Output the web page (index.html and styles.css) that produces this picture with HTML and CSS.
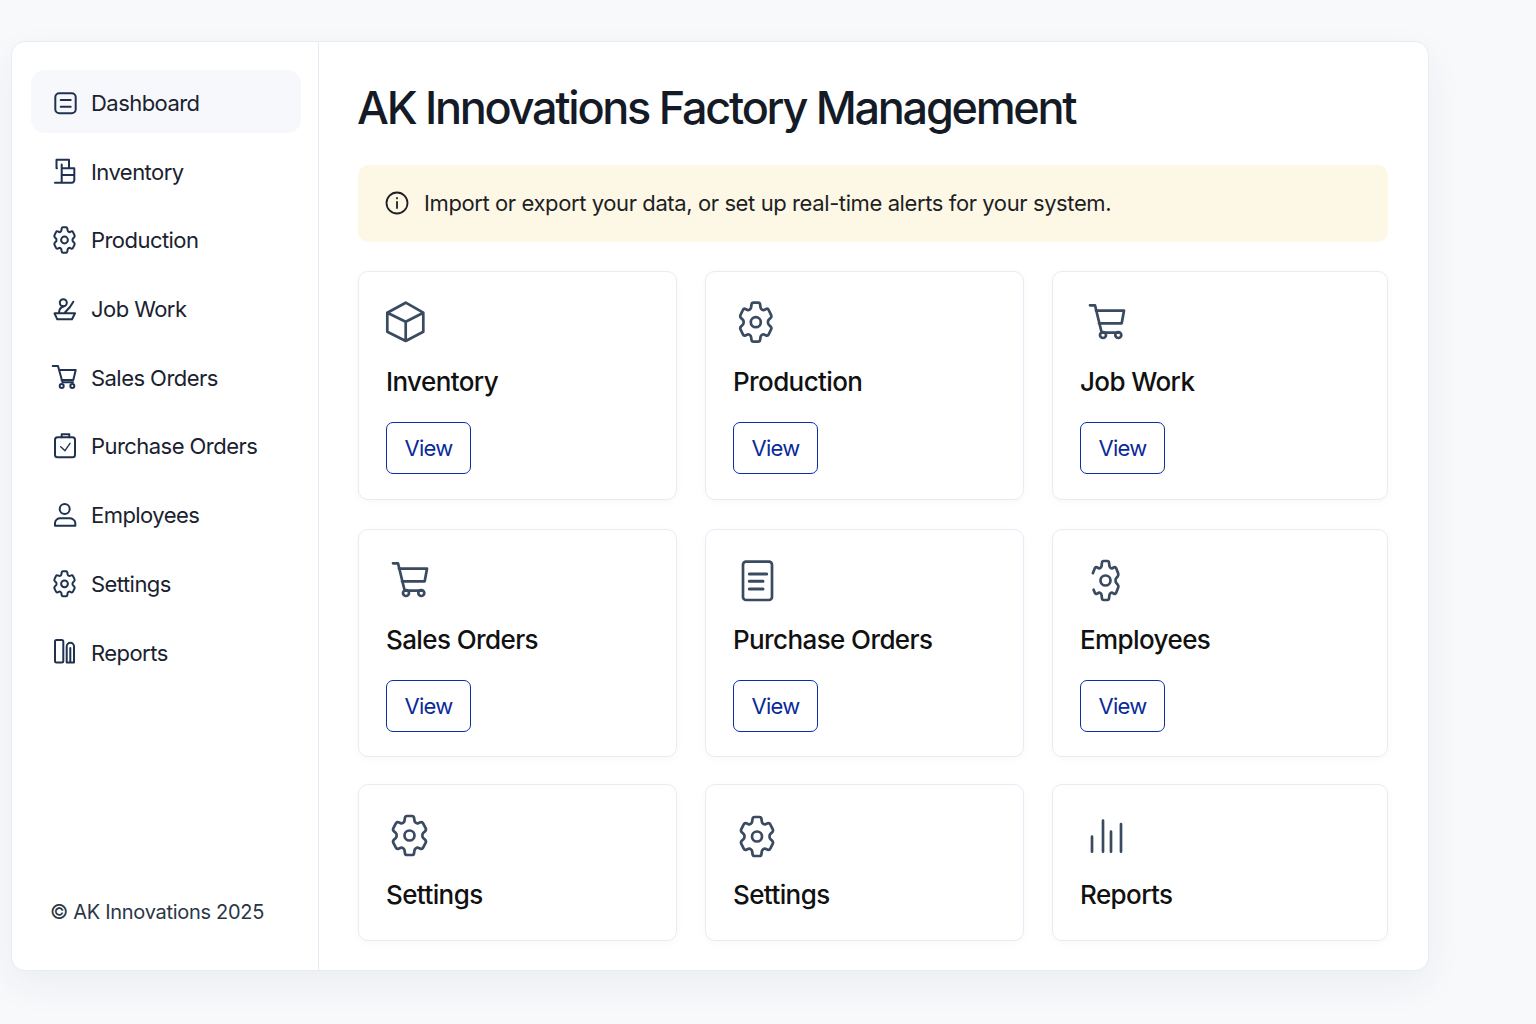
FILE: index.html
```html
<!DOCTYPE html>
<html lang="en">

<head>
  <meta charset="UTF-8">
  <meta name="viewport" content="width=device-width, initial-scale=1.0">
  <title>AK Innovations Factory Management</title>
  <link rel="stylesheet" href="styles.css">
</head>

<body>
  <svg class="defs" width="0" height="0">
    <symbol id="gear" viewBox="2.3 3 19.4 18" preserveAspectRatio="none" overflow="visible">
      <path vector-effect="non-scaling-stroke" d="M9.594 3.94c.09-.542.56-.94 1.11-.94h2.593c.55 0 1.02.398 1.11.94l.213 1.281c.063.374.313.686.645.87.074.04.147.083.22.127.325.196.72.257 1.075.124l1.217-.456a1.125 1.125 0 0 1 1.37.49l1.296 2.247a1.125 1.125 0 0 1-.26 1.431l-1.003.827c-.293.241-.438.613-.43.992a7.723 7.723 0 0 1 0 .255c-.008.378.137.75.43.991l1.004.827c.424.35.534.955.26 1.43l-1.298 2.247a1.125 1.125 0 0 1-1.369.491l-1.217-.456c-.355-.133-.75-.072-1.076.124a6.47 6.47 0 0 1-.22.128c-.331.183-.581.495-.644.869l-.213 1.281c-.09.543-.56.94-1.11.94h-2.594c-.55 0-1.019-.398-1.11-.94l-.213-1.281c-.062-.374-.312-.686-.644-.87a6.52 6.52 0 0 1-.22-.127c-.325-.196-.72-.257-1.076-.124l-1.217.456a1.125 1.125 0 0 1-1.369-.49l-1.297-2.247a1.125 1.125 0 0 1 .26-1.431l1.004-.827c.292-.24.437-.613.43-.991a6.932 6.932 0 0 1 0-.255c.007-.38-.138-.751-.43-.992l-1.004-.827a1.125 1.125 0 0 1-.26-1.43l1.297-2.247a1.125 1.125 0 0 1 1.37-.491l1.216.456c.356.133.751.072 1.076-.124.072-.044.146-.086.22-.128.332-.183.582-.495.644-.869l.214-1.28Z"/>
    </symbol>
    <!-- same gear, outline left open on the left side -->
    <symbol id="gear-open" viewBox="2.3 3 19.4 18" preserveAspectRatio="none" overflow="visible">
      <path vector-effect="non-scaling-stroke" d="M3.557 8.623l1.297-2.247a1.125 1.125 0 0 1 1.37-.491l1.216.456c.356.133.751.072 1.076-.124.072-.044.146-.086.22-.128.332-.183.582-.495.644-.869l.214-1.28c.09-.542.56-.94 1.11-.94h2.593c.55 0 1.02.398 1.11.94l.213 1.281c.063.374.313.686.645.87.074.04.147.083.22.127.325.196.72.257 1.075.124l1.217-.456a1.125 1.125 0 0 1 1.37.49l1.296 2.247a1.125 1.125 0 0 1-.26 1.431l-1.003.827c-.293.241-.438.613-.43.992a7.723 7.723 0 0 1 0 .255c-.008.378.137.75.43.991l1.004.827c.424.35.534.955.26 1.43l-1.298 2.247a1.125 1.125 0 0 1-1.369.491l-1.217-.456c-.355-.133-.75-.072-1.076.124a6.47 6.47 0 0 1-.22.128c-.331.183-.581.495-.644.869l-.213 1.281c-.09.543-.56.94-1.11.94h-2.594c-.55 0-1.019-.398-1.11-.94l-.213-1.281c-.062-.374-.312-.686-.644-.87a6.52 6.52 0 0 1-.22-.127c-.325-.196-.72-.257-1.076-.124l-1.217.456a1.125 1.125 0 0 1-1.369-.49l-.8-1.4"/>
    </symbol>
    <symbol id="cart" viewBox="0 0 48 44" overflow="visible">
      <path d="M10 5.3h5l6.7 27.4h17"/>
      <path d="M16 10.7h28l-2.3 12.600H19"/>
      <circle cx="23" cy="35" r="3"/>
      <circle cx="38.300" cy="35" r="3"/>
    </symbol>
  </svg>

  <div class="shell">
    <aside class="sidebar">
      <nav class="nav">
        <a class="nav-item active" href="javascript:;">
          <svg class="nav-icon" viewBox="0 0 26 26"><rect x="3.300" y="3.300" width="20.400" height="20" rx="4"/><path d="M8.700 10h10M8.700 16.700h10"/></svg>
          <span>Dashboard</span>
        </a>
        <a class="nav-item" href="javascript:;">
          <svg class="nav-icon" viewBox="0 0 26 26"><path d="M5 9.300H4.500V.8H17v8.500H9.700M9.700 5.500v18.200M3 23.700h16.800a2.400 2.400 0 0 0 2.500-2.400V9.300H9.700M9.700 16h12.600"/></svg>
          <span>Inventory</span>
        </a>
        <a class="nav-item" href="javascript:;">
          <svg class="nav-icon" viewBox="0 0 26 26"><use href="#gear" x="1" y="0.3" width="23" height="25.400"/><circle cx="12.500" cy="13" r="3.400"/></svg>
          <span>Production</span>
        </a>
        <a class="nav-item" href="javascript:;">
          <svg class="nav-icon" viewBox="0 0 26 26"><circle cx="11.300" cy="6.700" r="3.500"/><path d="M2.500 17.300H23l-3 6H5.300zM7 17c0-3 1-5.500 4.500-6.500M21.300 5.700 18 11l-5.500 6"/></svg>
          <span>Job Work</span>
        </a>
        <a class="nav-item" href="javascript:;">
          <svg class="nav-icon" viewBox="0 0 26 26"><path d="M.7 1H6l4.500 16.300H21M7 5h16.700l-2.400 10H9.500"/><circle cx="9.700" cy="21" r="2"/><circle cx="20.300" cy="21" r="2"/></svg>
          <span>Sales Orders</span>
        </a>
        <a class="nav-item" href="javascript:;">
          <svg class="nav-icon" viewBox="0 0 26 26"><rect x="3" y="4.300" width="20" height="20" rx="2.500"/><path d="M9.700 4.300v-3h7.600v3"/><path class="thin" d="m8.700 13.700 4.300 4 5-7.400"/></svg>
          <span>Purchase Orders</span>
        </a>
        <a class="nav-item" href="javascript:;">
          <svg class="nav-icon" viewBox="0 0 26 26"><circle cx="12.700" cy="7" r="5"/><path d="M3 23.700V21c0-3 3-4.700 5-4.700h9.500c2.500 0 5.800 1.700 5.800 4.700v2.700z"/></svg>
          <span>Employees</span>
        </a>
        <a class="nav-item" href="javascript:;">
          <svg class="nav-icon" viewBox="0 0 26 26"><use href="#gear" x="1" y="0.3" width="23" height="25"/><circle cx="12.500" cy="12.800" r="3.400"/></svg>
          <span>Settings</span>
        </a>
        <a class="nav-item" href="javascript:;">
          <svg class="nav-icon" viewBox="0 0 26 26"><rect x="3" y="0" width="8.300" height="22.500" rx="1.500"/><path d="M14.700 22.500V6.500a3.600 3.600 0 0 1 7.300 0v16zM18.300 8v14"/></svg>
          <span>Reports</span>
        </a>
      </nav>
      <p class="copyright">© AK Innovations 2025</p>
    </aside>

    <main class="main">
      <h1 class="title">AK Innovations Factory Management</h1>
      <div class="notice">
        <svg class="notice-icon" viewBox="0 0 24 24"><circle cx="12" cy="12" r="10.500"/><path d="M12 11v6"/><path d="M12 7v.4"/></svg>
        <span>Import or export your data, or set up real-time alerts for your system.</span>
      </div>

      <div class="cards">
        <section class="card">
          <svg class="card-icon" viewBox="0 0 48 44"><path d="M19.700 2.700 37.300 12.700V31.700L19.700 41 1.300 31.700V12.700zM1.300 12.700 19.700 21.700 37.300 12.700M19.700 21.700V41"/></svg>
          <h2 class="card-title">Inventory</h2>
          <a class="btn" href="javascript:;">View</a>
        </section>
        <section class="card">
          <svg class="card-icon" viewBox="0 0 48 44"><use href="#gear" x="5.300" y="2.700" width="35" height="39"/><circle cx="22.800" cy="22.200" r="5"/></svg>
          <h2 class="card-title">Production</h2>
          <a class="btn" href="javascript:;">View</a>
        </section>
        <section class="card">
          <svg class="card-icon" viewBox="0 0 48 44"><use href="#cart" width="48" height="44"/></svg>
          <h2 class="card-title">Job Work</h2>
          <a class="btn" href="javascript:;">View</a>
        </section>
        <section class="card">
          <svg class="card-icon" viewBox="0 0 48 44"><use href="#cart" x="-3" width="48" height="44"/></svg>
          <h2 class="card-title">Sales Orders</h2>
          <a class="btn" href="javascript:;">View</a>
        </section>
        <section class="card">
          <svg class="card-icon" viewBox="0 0 48 44"><rect x="10" y="3.700" width="29" height="38.300" rx="3"/><path class="bold" d="M16.300 16h17.400M16.300 23.300h13.700M16.300 31h13.700"/></svg>
          <h2 class="card-title">Purchase Orders</h2>
          <a class="btn" href="javascript:;">View</a>
        </section>
        <section class="card">
          <svg class="card-icon" viewBox="0 0 48 44"><use href="#gear-open" x="11" y="3" width="29" height="39"/><circle cx="25.500" cy="22.500" r="5"/></svg>
          <h2 class="card-title">Employees</h2>
          <a class="btn" href="javascript:;">View</a>
        </section>
        <section class="card">
          <svg class="card-icon" viewBox="0 0 48 44"><use href="#gear" x="5" y="3" width="37" height="39"/><circle cx="23.500" cy="22.500" r="5"/></svg>
          <h2 class="card-title">Settings</h2>
        </section>
        <section class="card">
          <svg class="card-icon" viewBox="0 0 48 44"><use href="#gear" x="6" y="4" width="36" height="39"/><circle cx="24" cy="23.500" r="5"/></svg>
          <h2 class="card-title">Settings</h2>
        </section>
        <section class="card">
          <svg class="card-icon" viewBox="0 0 48 44"><path d="M12 38.700v-15M23 38.700v-31M31 38.700v-20M41 38.700V11"/></svg>
          <h2 class="card-title">Reports</h2>
        </section>
      </div>
    </main>
  </div>
</body>

</html>
```

FILE: styles.css
```css
* {
  padding: 0;
  margin: 0;
  box-sizing: border-box;
}

body {
  padding: 41px 0 0 11px;
  height: 1024px;
  overflow: hidden;
  background: #f8f9fb;
  font-family: "Inter", "Liberation Sans", sans-serif;
  color: #141b26;
}

a {
  text-decoration: none;
  color: inherit;
}

svg {
  fill: none;
  overflow: visible;
}

.defs {
  display: block;
  height: 0;
}

.shell {
  width: 1418px;
  height: 930px;
  display: flex;
  background: #fff;
  border: solid 1px #e7ecf4;
  border-radius: 14px;
  box-shadow: 0 14px 36px rgba(30, 45, 80, 0.06);
}

.sidebar {
  width: 307px;
  flex-shrink: 0;
  display: flex;
  flex-direction: column;
  padding: 28px 17px 46px 19px;
  border-right: solid 1px #e7ecf4;
}

.nav {
  display: flex;
  flex-direction: column;
  gap: 5.7px;
}

.nav-item {
  height: 63px;
  display: flex;
  align-items: center;
  gap: 13px;
  padding: 3px 0 0 21px;
  border-radius: 14px;
  font-size: 22px;
  letter-spacing: -0.55px;
  color: #1a2230;
}

.nav-item.active {
  background: #f7f8fb;
}

.nav-icon {
  width: 26px;
  height: 26px;
  flex-shrink: 0;
  stroke: #1f3350;
  stroke-width: 2;
  stroke-linejoin: round;
  stroke-linecap: round;
}

.nav-icon .thin {
  stroke-width: 1.4;
}

.copyright {
  margin-top: auto;
  padding-left: 19px;
  font-size: 20px;
  letter-spacing: -0.3px;
  color: #2b3646;
}

.main {
  flex: 1;
  padding: 35px 40px 0 39px;
}

.title {
  margin-left: -1px;
  font-size: 45px;
  line-height: 62px;
  font-weight: 500;
  letter-spacing: -2.27px;
  color: #141b26;
}

.notice {
  height: 77px;
  margin-top: 26px;
  display: flex;
  align-items: center;
  gap: 15px;
  padding: 0 0 1px 27px;
  background: #fdf8e6;
  border-radius: 10px;
  font-size: 22px;
  letter-spacing: -0.4px;
  color: #1d1f24;
}

.notice-icon {
  width: 24px;
  height: 24px;
  stroke: #1d1f24;
  stroke-width: 1.8;
  stroke-linecap: round;
}

.cards {
  margin-top: 29px;
  display: grid;
  grid-template-columns: 319px 319px 1fr;
  grid-template-rows: 229px 229px 157px;
  gap: 28px;
}

.card {
  padding: 28px 0 0 27px;
  background: #fff;
  border: solid 1px #e7ecf4;
  border-radius: 10px;
  box-shadow: 0 2px 8px rgba(30, 45, 80, 0.03);
}

/* second row sits a pixel lower, third a pixel higher */
.card:nth-child(n+4):nth-child(-n+6) {
  margin-top: 1px;
}

.card:nth-child(n+7) {
  margin: -1px 0 1px;
}

.card-icon {
  display: block;
  width: 48px;
  height: 44px;
  stroke: #3a4a60;
  stroke-width: 2.7;
  stroke-linejoin: round;
  stroke-linecap: round;
}

.card-icon .bold {
  stroke-width: 3;
}

.card-title {
  margin-top: 16px;
  font-size: 26px;
  line-height: 44px;
  font-weight: 500;
  letter-spacing: -0.6px;
  color: #111;
}

.btn {
  width: 85px;
  height: 52px;
  margin-top: 18px;
  display: flex;
  justify-content: center;
  align-items: center;
  border: solid 1.5px #0a2ea6;
  border-radius: 7px;
  font-size: 22px;
  letter-spacing: -0.7px;
  color: #0a2a9a;
}
```
